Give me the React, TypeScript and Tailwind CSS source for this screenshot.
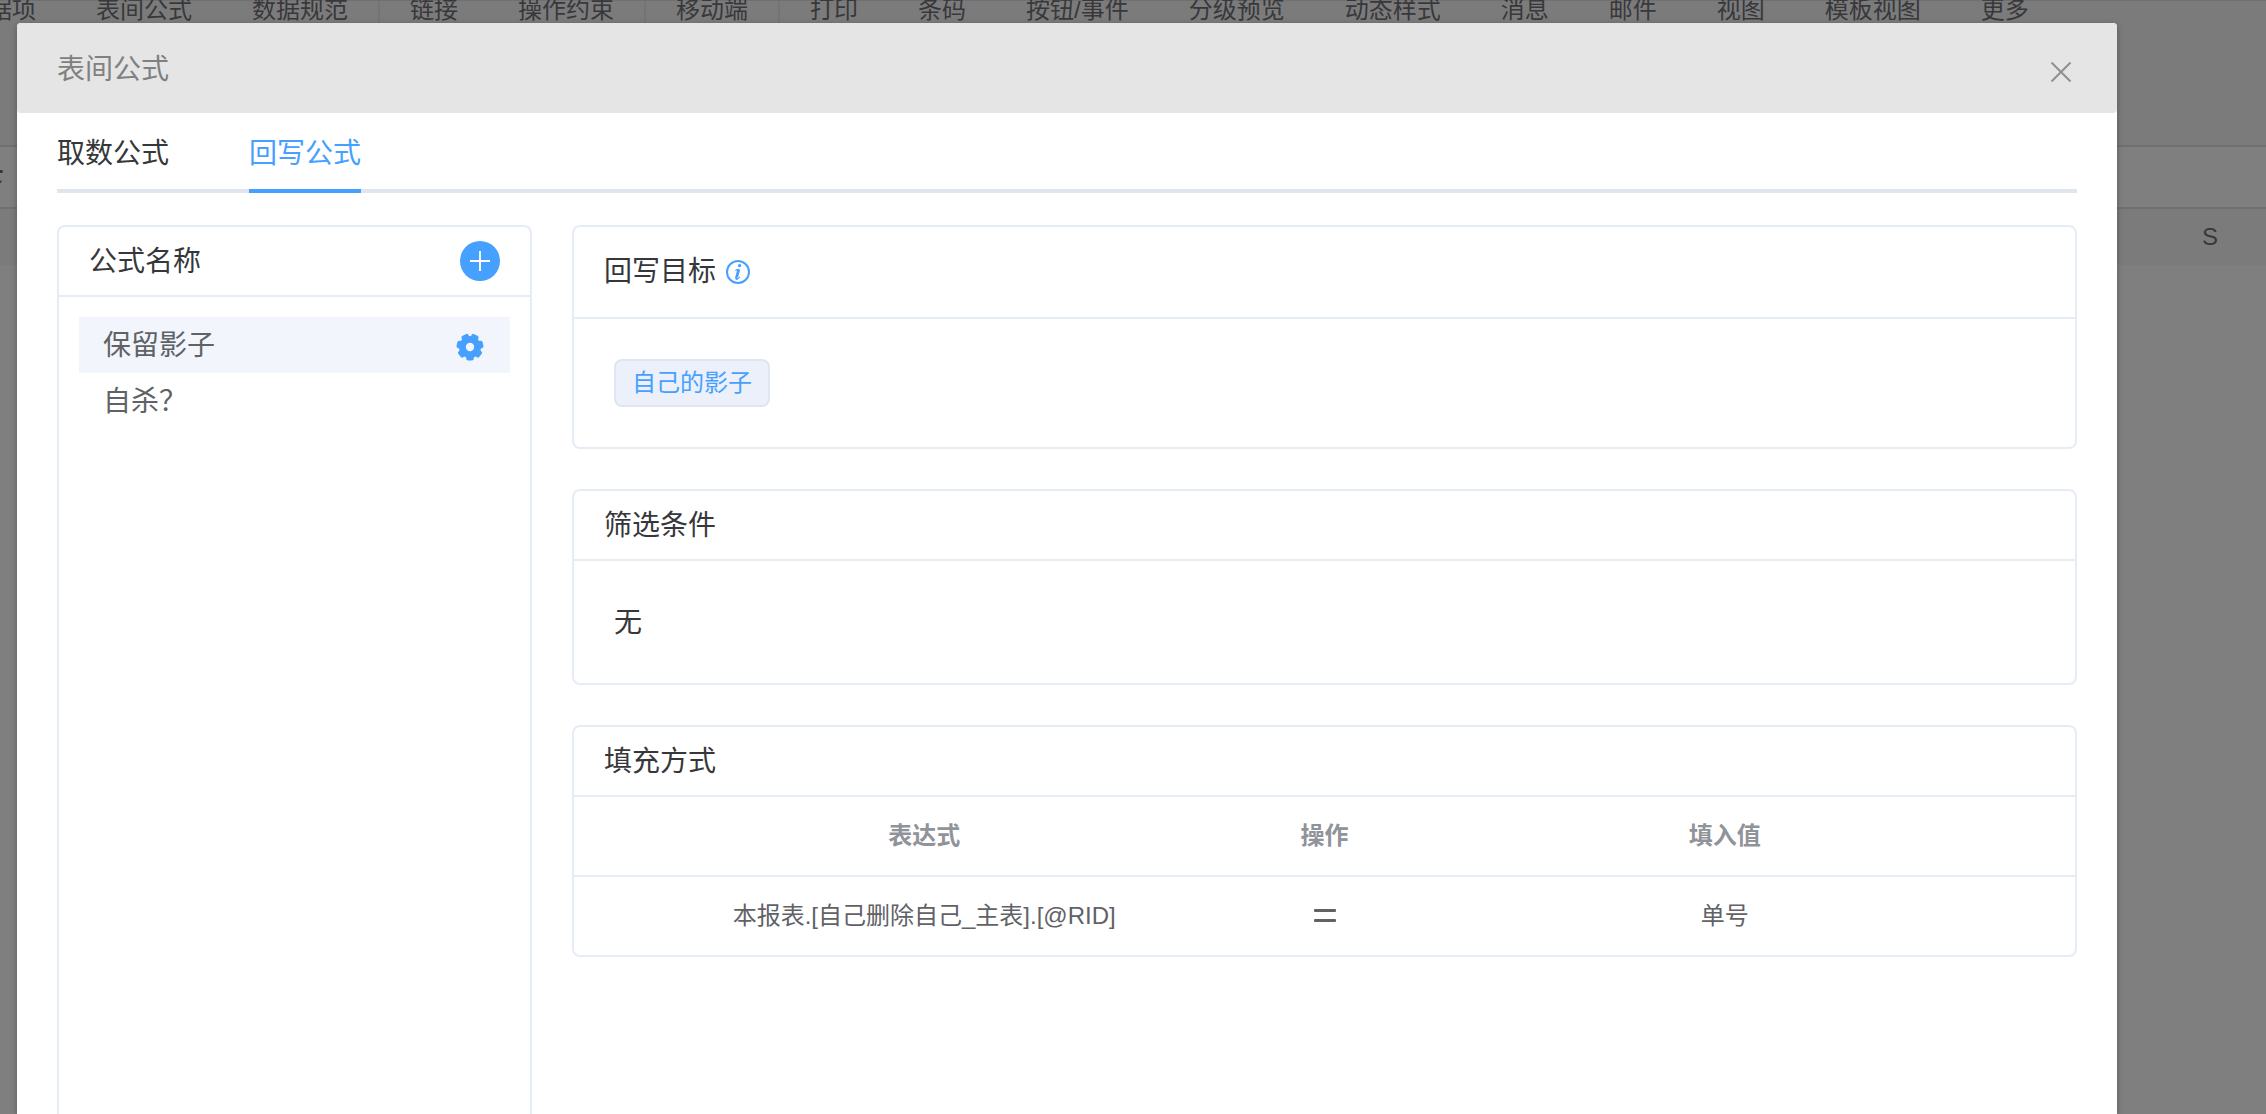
import React from "react";

const menu = [
  { label: "数据项" },
  { label: "表间公式" },
  { label: "数据规范", divided: true },
  { label: "链接" },
  { label: "操作约束", divided: true },
  { label: "移动端", divided: true },
  { label: "打印" },
  { label: "条码" },
  { label: "按钮/事件" },
  { label: "分级预览" },
  { label: "动态样式" },
  { label: "消息" },
  { label: "邮件" },
  { label: "视图" },
  { label: "模板视图" },
  { label: "更多" },
];

const formulas = ["保留影子", "自杀？"];

const rows = [{ expression: "本报表.[自己删除自己_主表].[@RID]", value: "单号" }];

const CloseIcon = () => (
  <svg width="20" height="20" viewBox="0 0 20 20" fill="none" stroke="currentColor" strokeWidth="2">
    <path d="M0.5 0.5l19 19M19.5 0.5l-19 19" />
  </svg>
);

const PlusIcon = () => (
  <svg width="20" height="20" viewBox="0 0 20 20" fill="none" stroke="currentColor" strokeWidth="2">
    <path d="M10 0v20M0 10h20" />
  </svg>
);

const GearIcon = () => (
  <svg width="28" height="28" viewBox="-14 -14 28 28" fill="currentColor">
    <path
      fillRule="evenodd"
      d="M0-11a11 11 0 1 0 0 22a11 11 0 1 0 0-22zM0-4.2a4.2 4.2 0 1 1 0 8.4a4.2 4.2 0 1 1 0-8.4z"
    />
    {[0, 1, 2, 3, 4, 5, 6].map((tooth) => (
      <rect
        key={tooth}
        x="-3.8"
        y="7"
        width="7.6"
        height="6.4"
        rx="2"
        transform={`rotate(${(tooth * 360) / 7})`}
      />
    ))}
  </svg>
);

const InfoIcon = () => (
  <svg width="24" height="24" viewBox="0 0 24 24" fill="none" stroke="currentColor">
    <circle cx="12" cy="12" r="11" strokeWidth="2" />
    <circle cx="13.6" cy="5.6" r="1.7" fill="currentColor" stroke="none" />
    <path d="M9.4 10.5c1-.6 2.200-1 3.600-1.100" strokeWidth="1.200" />
    <path d="M12.8 9.4l-2.2 8c-.2 1 .1 1.300.7 1.100" strokeWidth="2.800" />
    <path d="M10.800 19.200c1.200-.2 2.200-1.100 3-2.400" strokeWidth="1.200" />
  </svg>
);

const EqualIcon = () => (
  <svg width="22" height="14" viewBox="0 0 22 14" fill="currentColor" role="img" aria-label="=">
    <rect width="22" height="3" rx="1" />
    <rect y="10" width="22" height="3" rx="1" />
  </svg>
);

type PanelProps = {
  title: string;
  tall?: boolean;
  extra?: React.ReactNode;
  children: React.ReactNode;
};

const Panel: React.FC<PanelProps> = ({ title, tall, extra, children }) => (
  <section className="rounded-lg border-2 border-[#e6ecf6]">
    <header
      className={`flex items-center gap-2.5 border-b-2 border-[#e6ecf6] px-[30px] ${
        tall ? "h-[92px]" : "h-[70px] pt-0.5"
      }`}
    >
      <h2>{title}</h2>
      {extra}
    </header>
    {children}
  </section>
);

const Backdrop = () => (
  <div className="text-2xl text-[#38383b]">
    <nav className="-ml-[66px] flex h-[145px] items-start border-t border-[#6f7072] bg-[#7b7b7b]">
      {menu.map(({ label, divided }) => (
        <a
          key={label}
          href="#"
          className={`h-[22px] shrink-0 px-[30px] leading-[18px] whitespace-nowrap ${
            divided ? "border-r-2 border-[#717576]" : ""
          }`}
        >
          {label}
        </a>
      ))}
    </nav>
    <div className="flex h-16 items-center border-y-2 border-[#707070] bg-[#7f7f7f]">
      <svg width="3" height="14" viewBox="0 0 3 14" fill="currentColor">
        <path d="M0 0h2l1 1v1l-1 1H0zM0 11l2-1-1 3H0z" />
      </svg>
    </div>
    <div className="flex h-14 items-center justify-end bg-[#7b7b7c] px-12">S</div>
  </div>
);

export default function App() {
  return (
    <div className="relative h-screen overflow-hidden bg-[#7f7f7f] font-['Liberation_Sans','Noto_Sans_CJK_SC',sans-serif]">
      <Backdrop />

      <div
        role="dialog"
        aria-labelledby="dialog-title"
        className="absolute top-[23px] right-[149px] bottom-0 left-[17px] flex flex-col rounded-t bg-white text-[28px] leading-10 text-[#36373a] shadow-[0_2px_6px_rgba(0,0,0,0.3)]"
      >
        <header className="flex h-[90px] shrink-0 items-center justify-between rounded bg-[#e5e5e5] pr-[46px] pl-10">
          <h1 id="dialog-title" className="pt-1 text-[#808080]">
            表间公式
          </h1>
          <button type="button" aria-label="关闭" className="mt-2 text-[#8f9093]">
            <CloseIcon />
          </button>
        </header>

        <div className="flex min-h-0 grow flex-col px-10">
          <div role="tablist" className="relative flex h-20 shrink-0 gap-20">
            <div className="absolute inset-x-0 bottom-0 h-1 bg-[#e1e5ec]" />
            <button
              type="button"
              role="tab"
              aria-selected="false"
              className="relative border-b-4 border-transparent pt-1.5"
            >
              取数公式
            </button>
            <button
              type="button"
              role="tab"
              aria-selected="true"
              className="relative border-b-4 border-[#46a0ff] pt-1.5 text-[#46a0ff]"
            >
              回写公式
            </button>
          </div>

          <div className="mt-8 flex min-h-0 grow gap-10">
            <aside className="w-[475px] shrink-0 rounded-t-lg border-2 border-b-0 border-[#e6ecf6]">
              <header className="flex h-[70px] items-center justify-between border-b-2 border-[#e6ecf6] px-[30px]">
                <h2 className="pt-0.5">公式名称</h2>
                <button
                  type="button"
                  aria-label="新增公式"
                  className="flex size-10 items-center justify-center rounded-full bg-[#46a0ff] text-white"
                >
                  <PlusIcon />
                </button>
              </header>
              <ul className="p-5 text-[#606266]">
                {formulas.map((name, i) => (
                  <li
                    key={name}
                    className={`flex h-14 items-center justify-between pr-[26px] pl-6 ${
                      i === 0 ? "bg-[#f2f5fc]" : ""
                    }`}
                  >
                    <button type="button" className="pt-0.5">
                      {name}
                    </button>
                    {i === 0 && (
                      <button type="button" aria-label="设置" className="mt-1 text-[#46a0ff]">
                        <GearIcon />
                      </button>
                    )}
                  </li>
                ))}
              </ul>
            </aside>

            <main className="flex grow flex-col gap-10">
              <Panel
                title="回写目标"
                tall
                extra={
                  <span className="text-[#46a0ff]">
                    <InfoIcon />
                  </span>
                }
              >
                <div className="p-10">
                  <button
                    type="button"
                    className="block h-12 rounded-lg border-2 border-[#e0e6f1] bg-[#ecf0fa] px-4 text-2xl text-[#46a0ff]"
                  >
                    自己的影子
                  </button>
                </div>
              </Panel>

              <Panel title="筛选条件">
                <p className="px-10 pt-[42px] pb-10">无</p>
              </Panel>

              <Panel title="填充方式">
                <table className="w-full table-fixed text-center text-2xl">
                  <thead>
                    <tr className="h-[79px] border-b-2 border-[#e6ecf6] text-[#909399]">
                      <th className="w-11/30 pl-[10%]">表达式</th>
                      <th>操作</th>
                      <th className="w-11/30 pr-[10%]">填入值</th>
                    </tr>
                  </thead>
                  <tbody className="text-[#606266]">
                    {rows.map(({ expression, value }) => (
                      <tr key={expression} className="h-[79px]">
                        <td className="pl-[10%]">{expression}</td>
                        <td>
                          <span className="flex justify-center">
                            <EqualIcon />
                          </span>
                        </td>
                        <td className="pr-[10%]">{value}</td>
                      </tr>
                    ))}
                  </tbody>
                </table>
              </Panel>
            </main>
          </div>
        </div>
      </div>
    </div>
  );
}
